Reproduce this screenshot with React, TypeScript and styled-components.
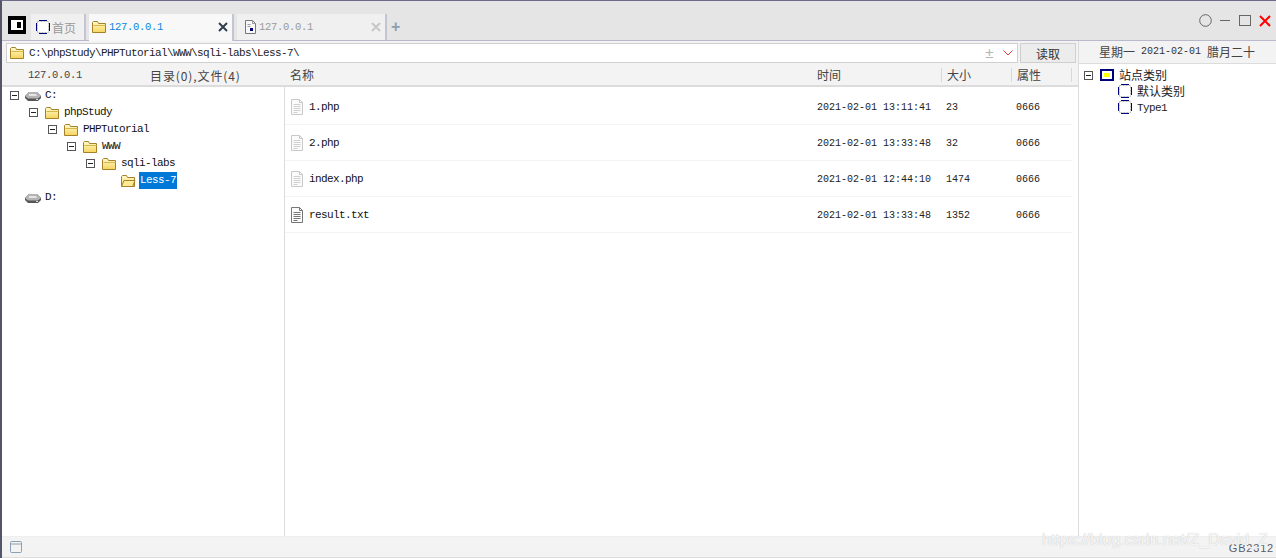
import React from "react";
import styled, { createGlobalStyle } from "styled-components";

const CJK = `"Noto Sans CJK SC", "Liberation Sans", sans-serif`;
const MONO = `"Liberation Mono", "Noto Sans CJK SC", monospace`;

const GlobalStyle = createGlobalStyle`
  html, body { margin: 0; padding: 0; background: #fff; }
  * { box-sizing: border-box; }
`;

const Page = styled.div`
  width: 1276px;
  height: 558px;
  display: flex;
  flex-direction: column;
  position: relative;
  overflow: hidden;
  background: #fff;
  border-top: 1px solid #6d6c8c;
  border-left: 2px solid #55556a;
  font-family: ${MONO};
  color: #222;
`;

const TitleBar = styled.div`
  height: 40px;
  flex: none;
  display: flex;
  align-items: flex-end;
  padding: 0 5px 0 6px;
  background: #e5e5e5;
  border-bottom: 1px solid #b9b9cb;
`;

const Logo = styled.div`
  width: 18px;
  height: 18px;
  margin: 0 5px 6px 0;
  background: #000;
  display: flex;
  align-items: center;
  justify-content: center;
`;

const LogoMark = styled.div`
  width: 12px;
  height: 10px;
  background: #fff;
  border-left: 3px solid #fff;
  display: flex;
  justify-content: center;
  &::after {
    content: "";
    width: 4px;
    height: 6px;
    margin-top: 2px;
    background: #000;
  }
`;

const Tab = styled.div<{ $width: number; $pad: number; $gap: number; $active?: boolean }>`
  width: ${(p) => p.$width}px;
  height: ${(p) => (p.$active ? 27 : 26)}px;
  margin-right: 3px;
  margin-bottom: ${(p) => (p.$active ? -1 : 0)}px;
  display: flex;
  align-items: center;
  gap: ${(p) => p.$gap}px;
  padding: ${(p) => (p.$active ? "0 3px 1px" : "0 3px")};
  padding-left: ${(p) => p.$pad}px;
  background: ${(p) => (p.$active ? "#f8f8f8" : "#f0f0f0")};
  border-right: 2px solid #c4c4d4;
  color: ${(p) => (p.$active ? "#0a84e0" : "#999")};
`;

const TabLabel = styled.span<{ $cjk?: boolean }>`
  flex: 1;
  font-family: ${(p) => (p.$cjk ? CJK : MONO)};
  font-size: ${(p) => (p.$cjk ? "12px" : "10.5px")};
  letter-spacing: ${(p) => (p.$cjk ? "0" : "-0.3px")};
`;

const TabClose = styled.svg`
  width: 10px;
  height: 10px;
  margin-right: 1px;
  flex: none;
`;

const PlusTab = styled.div`
  width: 14px;
  margin: 0 0 6px 1px;
  color: #8ea0b0;
  font: bold 16px/14px "Liberation Sans", sans-serif;
`;

const WindowButtons = styled.div`
  margin: 0 0 13px auto;
  display: flex;
  align-items: center;
  gap: 8px;
`;

const Body = styled.div`
  flex: 1;
  min-height: 0;
  display: flex;
`;

const MainPane = styled.div`
  width: 1076px;
  flex: none;
  display: flex;
  flex-direction: column;
`;

const AddressRow = styled.div`
  height: 22px;
  flex: none;
  display: flex;
  align-items: flex-end;
  padding: 0 2px 0 4px;
  gap: 2px;
  background: #f3f3f3;
`;

const AddressBox = styled.div`
  flex: 1;
  height: 20px;
  display: flex;
  align-items: center;
  gap: 4px;
  padding: 0 4px 0 2px;
  background: #fff;
  border: 1px solid #d0d0d0;
  font-size: 11px;
  letter-spacing: -0.6px;
  color: #222;
`;

const AddressText = styled.span`
  flex: 1;
`;

const PlusMinus = styled.span`
  color: #b5b5b5;
  font: 15px/14px "Liberation Sans", sans-serif;
  margin-right: 6px;
`;

const ReadButton = styled.div`
  width: 56px;
  height: 20px;
  display: flex;
  align-items: center;
  justify-content: center;
  background: #ececec;
  border: 1px solid #cfcfcf;
  font: 12px ${CJK};
  color: #333;
`;

const Columns = styled.div`
  flex: 1;
  min-height: 0;
  display: flex;
  padding-left: 4px;
`;

const TreePane = styled.div`
  width: 279px;
  flex: none;
  display: flex;
  flex-direction: column;
  border-right: 1px solid #dcdcdc;
`;

const TreeHeader = styled.div`
  height: 24px;
  flex: none;
  display: flex;
  align-items: center;
  background: #f3f3f3;
  border-bottom: 2px solid #dcdcdc;
  margin-left: -4px;
  width: 283px;
  font-size: 10.5px;
  letter-spacing: -0.3px;
  color: #444;
`;

const HostCell = styled.span`
  width: 148px;
  padding-left: 26px;
  padding-top: 2px;
`;

const CountCell = styled.span`
  font: 12px ${CJK};
  letter-spacing: 0.9px;
  color: #444;
  padding-top: 2px;
`;

const TreeRow = styled.div<{ $level: number }>`
  height: 17px;
  display: flex;
  align-items: center;
  padding-left: ${(p) => 4 + p.$level * 19}px;
`;

const Expander = styled.span`
  width: 9px;
  height: 9px;
  flex: none;
  margin-right: 6px;
  border: 1px solid #555;
  display: flex;
  align-items: center;
  justify-content: center;
  &::after {
    content: "";
    width: 5px;
    height: 1px;
    background: #222;
  }
`;

const ExpanderGap = styled.span`
  width: 15px;
  flex: none;
`;

const TreeLabel = styled.span<{ $selected?: boolean }>`
  margin-left: 3px;
  padding: 0 1px;
  height: 17px;
  line-height: 17px;
  font-size: 11px;
  letter-spacing: -0.6px;
  background: ${(p) => (p.$selected ? "#0078d7" : "transparent")};
  color: ${(p) => (p.$selected ? "#fff" : "#111")};
`;

const FilePane = styled.div`
  flex: 1;
  min-width: 0;
  display: flex;
  flex-direction: column;
`;

const Grid = `
  display: grid;
  grid-template-columns: 527px 130px 70px 60px;
`;

const FileHeader = styled.div`
  ${Grid}
  height: 24px;
  flex: none;
  align-items: center;
  background: #f3f3f3;
  border-bottom: 2px solid #dcdcdc;
  font: 12px ${CJK};
  color: #444;
  padding-right: 4px;
  width: 793px;
  margin-bottom: 2px;
`;

const HeaderCell = styled.span<{ $first?: boolean }>`
  padding-left: 5px;
  height: 14px;
  line-height: 14px;
  margin-top: 2px;
  border-right: 1px solid #d8d8d8;
  ${(p) => p.$first && "border-right: 0;"}
`;

const FileRow = styled.div`
  ${Grid}
  height: 36px;
  align-items: center;
  padding-top: 1px;
  border-bottom: 1px solid #f4f4f4;
  font-size: 10px;
  color: #222;
  width: 787px;
`;

const NameCell = styled.div`
  display: flex;
  align-items: center;
  gap: 6px;
  padding-left: 6px;
  font-size: 11px;
  letter-spacing: -0.6px;
  color: #111;
`;

const TimeCell = styled.div`
  padding-left: 5px;
  white-space: pre;
  color: #222;
`;

const ValueCell = styled.div`
  padding-left: 4px;
`;

const SidePane = styled.div`
  flex: 1;
  min-width: 0;
  display: flex;
  flex-direction: column;
  border-left: 1px solid #dcdcdc;
`;

const DateBar = styled.div`
  height: 23px;
  flex: none;
  display: flex;
  align-items: center;
  gap: 6px;
  padding-left: 20px;
  padding-bottom: 2px;
  background: #f3f3f3;
  border-bottom: 1px solid #dcdcdc;
  font: 12px ${CJK};
  color: #444;
`;

const DateNum = styled.span`
  font: 10px ${MONO};
  color: #333;
`;

const SideTree = styled.div`
  padding-top: 3px;
`;

const SideRow = styled.div<{ $child?: boolean }>`
  height: 16px;
  display: flex;
  align-items: center;
  gap: 5px;
  padding-left: ${(p) => (p.$child ? 39 : 5)}px;
`;

const SideExpander = styled(Expander)`
  margin-right: 2px;
`;

const SideLabel = styled.span<{ $mono?: boolean }>`
  font: ${(p) => (p.$mono ? `11px ${MONO}` : `12px ${CJK}`)};
  letter-spacing: ${(p) => (p.$mono ? "-0.6px" : "0")};
  margin-top: ${(p) => (p.$mono ? "1px" : "-2px")};
  color: #222;
`;

const StatusBar = styled.div`
  height: 22px;
  flex: none;
  display: flex;
  align-items: center;
  justify-content: space-between;
  padding: 0 2px 0 8px;
  background: #f3f3f3;
  border-top: 1px solid #eee;
  border-bottom: 1px solid #ddd;
`;

const Encoding = styled.span`
  font: 11px "Liberation Sans", sans-serif;
  letter-spacing: 0.8px;
  color: #5a5a6a;
  margin-top: 1px;
`;

const Watermark = styled.div`
  position: absolute;
  left: 1040px;
  top: 530px;
  font: 16px "Liberation Sans", sans-serif;
  color: rgba(255, 255, 255, 0.85);
  text-shadow: 0 0 1px rgba(170, 170, 170, 0.8);
  white-space: nowrap;
  pointer-events: none;
`;

const Folder: React.FC<{ open?: boolean }> = ({ open }) => (
  <svg width="16" height="14" viewBox="0 0 16 14" style={{ flex: "none" }}>
    <defs>
      <linearGradient id="folderFill" x1="0" y1="0" x2="0" y2="1">
        <stop offset="0" stopColor="#fffbd0" />
        <stop offset="1" stopColor="#f6d45c" />
      </linearGradient>
    </defs>
    <path
      d="M1.5 12.5V2.5l1-1h4l1 2h7v9z"
      fill="url(#folderFill)"
      stroke="#a5822a"
    />
    {open ? (
      <path d="M1.5 12.5l2.5-6h11l-2.5 6z" fill="#ffeb94" stroke="#a5822a" />
    ) : (
      <path d="M2.5 5.5h12" stroke="#d8b648" />
    )}
  </svg>
);

const Drive: React.FC = () => (
  <svg width="16" height="10" viewBox="0 0 16 10" style={{ flex: "none" }}>
    <path d="M0 5l4-4h8l4 4v2l-3 3H3L0 7z" fill="#555" />
    <path d="M0 5l4-4h8l4 4-3 2.5H3z" fill="#b4b4b4" />
    <path d="M4 3h7l1 2H4z" fill="#e4e4e4" />
    <path d="M11 8.5h2" stroke="#ddd" />
  </svg>
);

const FileIcon: React.FC<{ dark?: boolean }> = ({ dark }) => {
  const line = dark ? "#777" : "#d0d0d0";
  const edge = dark ? "#777" : "#c8c8c8";
  return (
    <svg width="12" height="16" viewBox="0 0 12 16" style={{ flex: "none" }}>
      <path d="M.5.5h8l3 3v12H.5z" fill="#fbfbfb" stroke={edge} />
      <path d="M8.5.5v3h3" fill="none" stroke={edge} />
      <path
        d="M2.5 5.5h7M2.5 7.5h7M2.5 9.5h7M2.5 11.5h7M2.5 13.5h4"
        stroke={line}
      />
    </svg>
  );
};

const TabDoc: React.FC = () => (
  <svg width="11" height="14" viewBox="0 0 11 14" style={{ flex: "none" }}>
    <path d="M.5.5h7l3 3v10H.5z" fill="#f8f8f8" stroke="#777" />
    <path d="M7.5.5v3h3M2.5 4.5h3M2.5 6.5h3" fill="none" stroke="#999" />
    <rect x="5" y="8" width="3" height="3" fill="#00007f" />
  </svg>
);

const SiteNode: React.FC<{ root?: boolean }> = ({ root }) =>
  root ? (
    <svg width="14" height="12" viewBox="0 0 14 12" style={{ flex: "none" }}>
      <rect x="1" y="1" width="12" height="10" fill="#fff" stroke="#00007f" strokeWidth="2" />
      <rect x="4" y="4" width="6" height="4" fill="#ffff00" />
    </svg>
  ) : (
    <svg width="14" height="14" viewBox="0 0 14 14" style={{ flex: "none" }}>
      <rect x="1.5" y="1.5" width="11" height="11" fill="#fff" stroke="#bbb" strokeDasharray="2 1" />
      <path d="M3 .5h8M3 13.5h8M.5 3v8M13.5 3v8" stroke="#00007f" />
    </svg>
  );

const TREE = [
  { name: "phpStudy", level: 1 },
  { name: "PHPTutorial", level: 2 },
  { name: "WWW", level: 3 },
  { name: "sqli-labs", level: 4 },
];

const FILES = [
  { name: "1.php", time: "2021-02-01 13:11:41", size: "23" },
  { name: "2.php", time: "2021-02-01 13:33:48", size: "32" },
  { name: "index.php", time: "2021-02-01 12:44:10", size: "1474" },
  { name: "result.txt", time: "2021-02-01 13:33:48", size: "1352", dark: true },
];

const App: React.FC = () => (
  <Page>
    <GlobalStyle />
    <TitleBar>
      <Logo>
        <LogoMark />
      </Logo>
      <Tab $width={55} $pad={5} $gap={2}>
        <SiteNode />
        <TabLabel $cjk>首页</TabLabel>
      </Tab>
      <Tab $width={145} $pad={2} $gap={2} $active>
        <Folder />
        <TabLabel>127.0.0.1</TabLabel>
        <TabClose viewBox="0 0 10 10">
          <path d="M1 1l8 8M9 1l-8 8" stroke="#2f4050" strokeWidth="2" />
        </TabClose>
      </Tab>
      <Tab $width={150} $pad={8} $gap={3}>
        <TabDoc />
        <TabLabel>127.0.0.1</TabLabel>
        <TabClose viewBox="0 0 10 10">
          <path d="M1 1l8 8M9 1l-8 8" stroke="#c8c8c8" strokeWidth="2" />
        </TabClose>
      </Tab>
      <PlusTab>+</PlusTab>
      <WindowButtons>
        <svg width="13" height="13" viewBox="0 0 13 13">
          <circle cx="6.5" cy="6.5" r="5.8" fill="none" stroke="#666" />
        </svg>
        <svg width="11" height="11" viewBox="0 0 11 11">
          <path d="M0 5.5h10" stroke="#666" />
        </svg>
        <svg width="12" height="11" viewBox="0 0 12 11">
          <rect x=".5" y=".5" width="11" height="10" fill="none" stroke="#666" />
        </svg>
        <svg width="12" height="12" viewBox="0 0 12 12">
          <path d="M1 1l10 10M11 1L1 11" stroke="#f00" strokeWidth="2" />
        </svg>
      </WindowButtons>
    </TitleBar>
    <Body>
      <MainPane>
        <AddressRow>
          <AddressBox>
            <Folder />
            <AddressText>C:\phpStudy\PHPTutorial\WWW\sqli-labs\Less-7\</AddressText>
            <PlusMinus>±</PlusMinus>
            <svg width="10" height="6" viewBox="0 0 10 6">
              <path d="M.5.5L5 5 9.5.5" fill="none" stroke="#e33" />
            </svg>
          </AddressBox>
          <ReadButton>读取</ReadButton>
        </AddressRow>
        <Columns>
          <TreePane>
            <TreeHeader>
              <HostCell>127.0.0.1</HostCell>
              <CountCell>目录(0),文件(4)</CountCell>
            </TreeHeader>
            <div>
              <TreeRow $level={0}>
                <Expander />
                <Drive />
                <TreeLabel>C:</TreeLabel>
              </TreeRow>
              {TREE.map((t) => (
                <TreeRow key={t.name} $level={t.level}>
                  <Expander />
                  <Folder />
                  <TreeLabel>{t.name}</TreeLabel>
                </TreeRow>
              ))}
              <TreeRow $level={5}>
                <ExpanderGap />
                <Folder open />
                <TreeLabel $selected>Less-7</TreeLabel>
              </TreeRow>
              <TreeRow $level={0}>
                <ExpanderGap />
                <Drive />
                <TreeLabel>D:</TreeLabel>
              </TreeRow>
            </div>
          </TreePane>
          <FilePane>
            <FileHeader>
              <HeaderCell $first>名称</HeaderCell>
              <HeaderCell>时间</HeaderCell>
              <HeaderCell>大小</HeaderCell>
              <HeaderCell>属性</HeaderCell>
            </FileHeader>
            {FILES.map((f) => (
              <FileRow key={f.name}>
                <NameCell>
                  <FileIcon dark={f.dark} />
                  {f.name}
                </NameCell>
                <TimeCell>{f.time}</TimeCell>
                <ValueCell>{f.size}</ValueCell>
                <ValueCell>0666</ValueCell>
              </FileRow>
            ))}
          </FilePane>
        </Columns>
      </MainPane>
      <SidePane>
        <DateBar>
          <span>星期一</span>
          <DateNum>2021-02-01</DateNum>
          <span>腊月二十</span>
        </DateBar>
        <SideTree>
          <SideRow>
            <SideExpander />
            <SiteNode root />
            <SideLabel>站点类别</SideLabel>
          </SideRow>
          <SideRow $child>
            <SiteNode />
            <SideLabel>默认类别</SideLabel>
          </SideRow>
          <SideRow $child>
            <SiteNode />
            <SideLabel $mono>Type1</SideLabel>
          </SideRow>
        </SideTree>
      </SidePane>
    </Body>
    <StatusBar>
      <svg width="12" height="12" viewBox="0 0 12 12">
        <rect x=".5" y=".5" width="11" height="11" rx="1" fill="none" stroke="#8aa0b0" />
        <path d="M1 3h10" stroke="#8aa0b0" />
      </svg>
      <Encoding>GB2312</Encoding>
    </StatusBar>
    <Watermark>https://blog.csdn.net/Z_David_Z</Watermark>
  </Page>
);

export default App;
